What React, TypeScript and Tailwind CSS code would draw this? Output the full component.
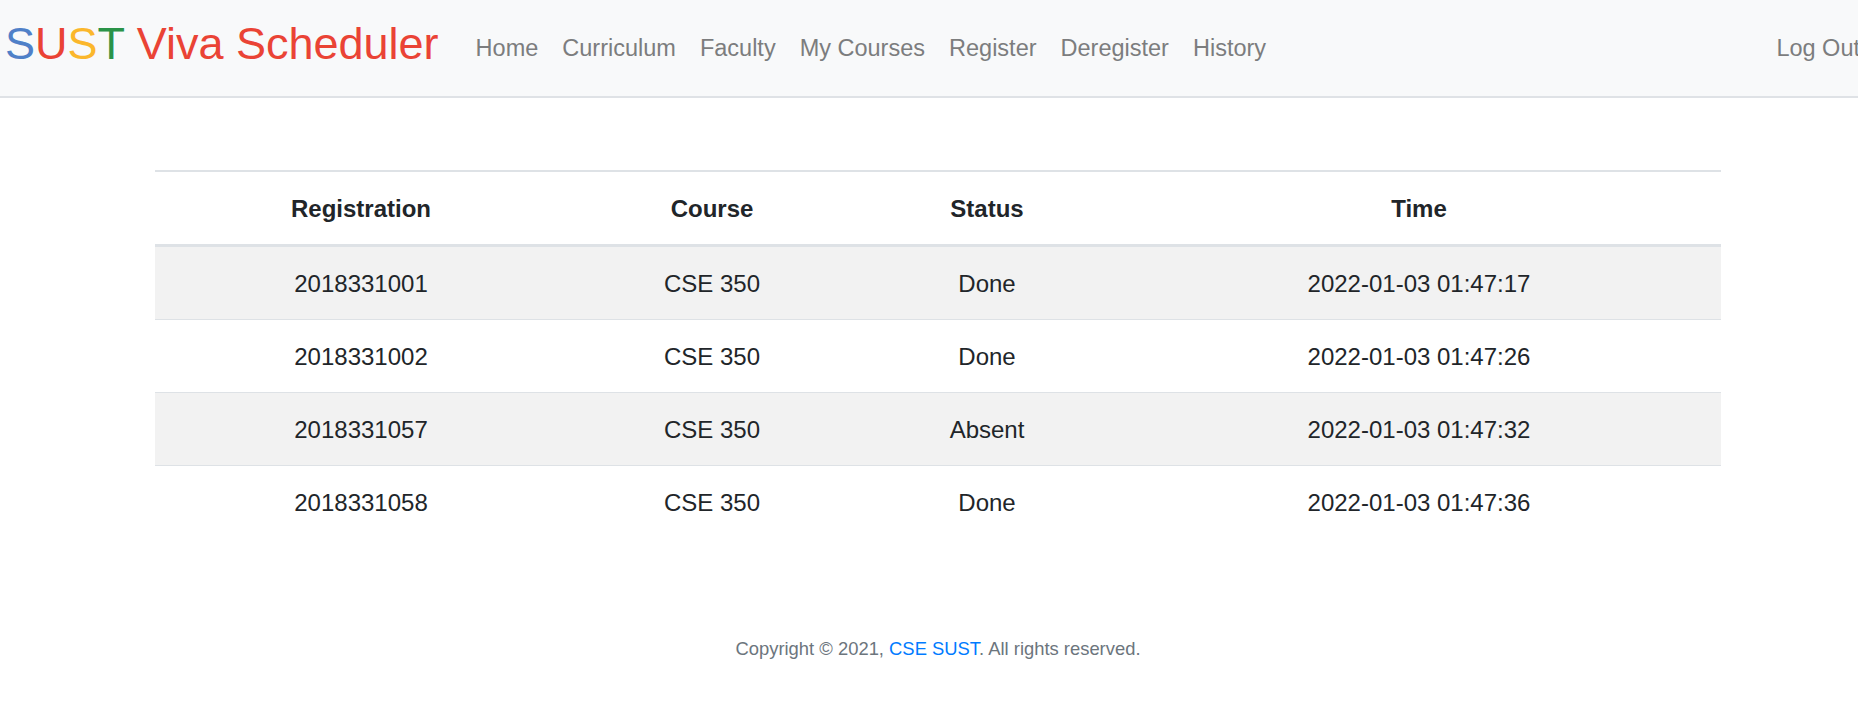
import React from "react";

const links = ["Home", "Curriculum", "Faculty", "My Courses", "Register", "Deregister", "History"];

const rows = [
  { reg: "2018331001", course: "CSE 350", status: "Done", time: "2022-01-03 01:47:17" },
  { reg: "2018331002", course: "CSE 350", status: "Done", time: "2022-01-03 01:47:26" },
  { reg: "2018331057", course: "CSE 350", status: "Absent", time: "2022-01-03 01:47:32" },
  { reg: "2018331058", course: "CSE 350", status: "Done", time: "2022-01-03 01:47:36" },
];

function Navbar() {
  return (
    <nav className="flex items-center h-[98px] bg-[#f8f9fa] border-b-2 border-[#dfe2e6] overflow-hidden">
      <a className="pl-[5px] text-[45px] leading-[72px] whitespace-nowrap text-[#ea4335] -mt-[8px]">
        <span className="text-[#4f80c8]">S</span>
        <span className="text-[#ea4335]">U</span>
        <span className="text-[#fbb72c]">S</span>
        <span className="text-[#2a9348]">T</span> Viva Scheduler
      </a>
      <ul className="flex ml-[25px]">
        {links.map((l) => (
          <li key={l}>
            <a className="block px-[12px] py-[12px] text-[23.5px] leading-[36px] text-[#7c7d7e] whitespace-nowrap">
              {l}
            </a>
          </li>
        ))}
      </ul>
      <a className="ml-auto mr-[-14px] px-[12px] py-[12px] text-[23.5px] leading-[36px] text-[#7c7d7e] whitespace-nowrap">
        Log Out
      </a>
    </nav>
  );
}

function HistoryTable() {
  return (
    <div className="pl-[155px] mt-[72px]">
      <table className="w-[1566px] table-fixed border-collapse text-[24px] leading-[36px] text-[#212529] text-center">
        <colgroup>
          <col className="w-[412px]" />
          <col className="w-[290px]" />
          <col className="w-[260px]" />
          <col />
        </colgroup>
        <thead>
          <tr className="border-t-2 border-[#dee2e6] border-b-[3px]">
            <th className="pt-[19px] pb-[17px] font-bold">Registration</th>
            <th className="pt-[19px] pb-[17px] font-bold">Course</th>
            <th className="pt-[19px] pb-[17px] font-bold">Status</th>
            <th className="pt-[19px] pb-[17px] font-bold">Time</th>
          </tr>
        </thead>
        <tbody>
          {rows.map((r, i) => (
            <tr
              key={r.reg}
              className={i % 2 === 0 ? "bg-[#f2f2f2] border-t-[1.5px] border-[#dee2e6]" : "border-t-[1.5px] border-[#dee2e6]"}
            >
              <td className="pt-[19px] pb-[17px]">{r.reg}</td>
              <td className="pt-[19px] pb-[17px]">{r.course}</td>
              <td className="pt-[19px] pb-[17px]">{r.status}</td>
              <td className="pt-[19px] pb-[17px]">{r.time}</td>
            </tr>
          ))}
        </tbody>
      </table>
    </div>
  );
}

export default function App() {
  return (
    <div className="min-h-[721px] bg-white overflow-hidden font-['Liberation_Sans',Arial,sans-serif]">
      <Navbar />
      <HistoryTable />
      <footer className="mt-[97px] pl-[18px] text-center text-[18.4px] leading-[27px] text-[#6c757d]">
        Copyright © 2021, <a className="text-[#007bff]">CSE SUST</a>. All rights reserved.
      </footer>
    </div>
  );
}
